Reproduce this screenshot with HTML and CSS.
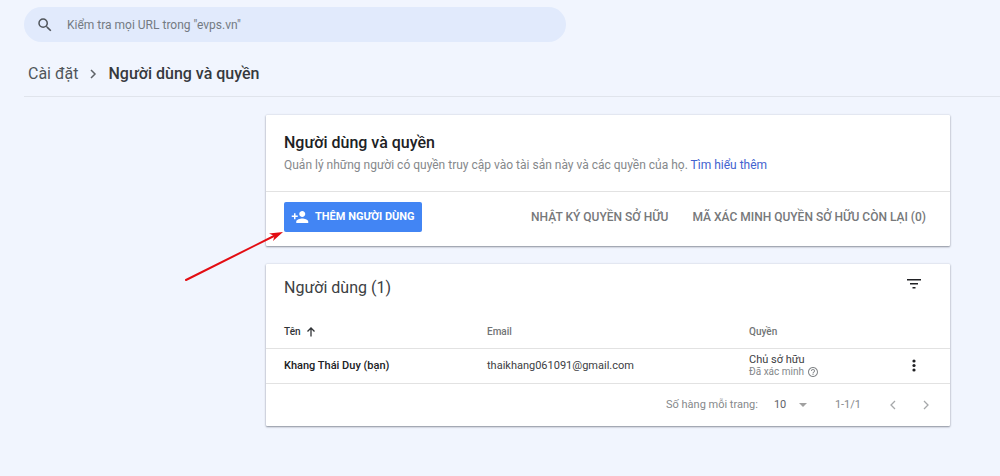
FILE: index.html
```html
<!DOCTYPE html>
<html lang="vi">
<head>
<meta charset="utf-8">
<meta name="viewport" content="width=device-width, initial-scale=1">
<title>Người dùng và quyền</title>
<link rel="stylesheet" href="styles.css">
</head>
<body>
<header class="topbar">
  <form class="search" role="search">
    <svg class="search-icon" viewBox="0 0 24 24" aria-hidden="true"><path d="M15.5 14h-.79l-.28-.27A6.47 6.47 0 0 0 16 9.5 6.5 6.5 0 1 0 9.5 16c1.61 0 3.09-.59 4.23-1.57l.27.28v.79l5 4.99L20.49 19l-4.99-5zm-6 0C7.01 14 5 11.99 5 9.5S7.01 5 9.5 5 14 7.01 14 9.5 11.99 14 9.5 14z"/></svg>
    <input class="search-input" type="text" aria-label="Kiểm tra URL" placeholder="Kiểm tra mọi URL trong &quot;evps.vn&quot;">
  </form>
</header>
<nav class="breadcrumb" aria-label="Breadcrumb">
  <a class="crumb" href="#">Cài đặt</a>
  <svg class="crumb-sep" viewBox="0 0 16 16" aria-hidden="true"><path d="M6 4l4 4-4 4"/></svg>
  <span class="crumb crumb-current">Người dùng và quyền</span>
</nav>
<main class="content">
  <section class="card">
    <div class="intro">
      <h1 class="intro-title">Người dùng và quyền</h1>
      <p class="intro-text">Quản lý những người có quyền truy cập vào tài sản này và các quyền của họ. <a class="link" href="#">Tìm hiểu thêm</a></p>
    </div>
    <div class="actions">
      <div class="add-wrap">
        <button class="add-button" type="button">
          <svg class="add-icon" viewBox="0 0 24 24" aria-hidden="true"><path d="M15 12c2.210 0 4-1.790 4-4s-1.790-4-4-4-4 1.790-4 4 1.790 4 4 4zm-9-2V7H4v3H1v2h3v3h2v-3h3v-2H6zm9 4c-2.670 0-8 1.340-8 4v2h16v-2c0-2.660-5.330-4-8-4z"/></svg>
          THÊM NGƯỜI DÙNG
        </button>
        <svg class="pointer" viewBox="0 0 100 50" aria-hidden="true"><path class="pointer-line" d="M2 49 90 5"/><path class="pointer-head" d="M99 1 89 10 90.500 5 85 2.500z"/></svg>
      </div>
      <div class="secondary">
        <button class="text-button" type="button">NHẬT KÝ QUYỀN SỞ HỮU</button>
        <button class="text-button" type="button">MÃ XÁC MINH QUYỀN SỞ HỮU CÒN LẠI (0)</button>
      </div>
    </div>
  </section>
  <section class="card">
    <div class="users-head">
      <h2 class="users-title">Người dùng (1)</h2>
      <button class="icon-button" type="button" aria-label="Lọc"><svg class="icon" viewBox="0 0 16 16" aria-hidden="true"><path d="M1 3h14v1.600H1zM4 7h8v1.600H4zM6.500 11h3v1.600h-3z"/></svg></button>
    </div>
    <table class="users">
      <thead>
        <tr>
          <th class="col-name sorted" scope="col"><span class="sort">Tên <svg class="sort-icon" viewBox="0 0 12 12" aria-hidden="true"><path d="M6 10.500V2M2.500 5.500 6 2l3.500 3.500"/></svg></span></th>
          <th class="col-email" scope="col">Email</th>
          <th class="col-role" scope="col">Quyền</th>
          <th class="col-menu"></th>
        </tr>
      </thead>
      <tbody>
        <tr>
          <td class="col-name name">Khang Thái Duy (bạn)</td>
          <td>thaikhang061091@gmail.com</td>
          <td>
            <div class="role">Chủ sở hữu</div>
            <div class="status">Đã xác minh <svg class="help" viewBox="0 0 24 24" aria-hidden="true"><path d="M11 18h2v-2h-2v2zm1-16C6.480 2 2 6.480 2 12s4.480 10 10 10 10-4.480 10-10S17.520 2 12 2zm0 18c-4.410 0-8-3.590-8-8s3.590-8 8-8 8 3.590 8 8-3.590 8-8 8zm0-14c-2.210 0-4 1.790-4 4h2c0-1.100.9-2 2-2s2 .9 2 2c0 2-3 1.750-3 5h2c0-2.250 3-2.500 3-5 0-2.210-1.790-4-4-4z"/></svg></div>
          </td>
          <td class="col-menu"><button class="icon-button" type="button" aria-label="Tùy chọn"><svg class="icon" viewBox="0 0 16 16" aria-hidden="true"><circle cx="8" cy="3" r="1.600"/><circle cx="8" cy="7.500" r="1.600"/><circle cx="8" cy="12" r="1.600"/></svg></button></td>
        </tr>
      </tbody>
    </table>
    <div class="pager">
      <label class="pager-label" for="rows">Số hàng mỗi trang:</label>
      <span class="rows-wrap">
        <select class="rows" id="rows"><option>10</option></select>
        <svg class="caret" viewBox="0 0 8 4" aria-hidden="true"><path d="M0 0h8L4 4z"/></svg>
      </span>
      <span class="range">1-1/1</span>
      <div class="pages">
        <button class="icon-button" type="button" aria-label="Trang trước"><svg class="icon chevron" viewBox="0 0 16 16" aria-hidden="true"><path d="M10 4 6 8l4 4"/></svg></button>
        <button class="icon-button" type="button" aria-label="Trang sau"><svg class="icon chevron" viewBox="0 0 16 16" aria-hidden="true"><path d="m6 4 4 4-4 4"/></svg></button>
      </div>
    </div>
  </section>
</main>
</body>
</html>
```
FILE: styles.css
```css
* { box-sizing: border-box; }

body {
  margin: 0;
  min-height: 100vh;
  background: #f1f5fe;
  color: #3c4043;
  font-family: Roboto, "Noto Sans", sans-serif;
  font-size: 12px;
  line-height: 16px;
}

button, input, select { font: inherit; color: inherit; }

button {
  padding: 0;
  border: 0;
  background: none;
  cursor: pointer;
}

a { text-decoration: none; }

.topbar { padding: 7px 26px 0 24px; }

.search {
  display: flex;
  align-items: center;
  gap: 13px;
  width: 57%;
  min-width: 280px;
  height: 35px;
  padding: 0 12px;
  border-radius: 18px;
  background: #e1eafc;
}

.search-icon { width: 18px; height: 18px; fill: #50555b; }

.search-input {
  flex: 1;
  min-width: 0;
  padding: 0;
  border: 0;
  outline: 0;
  background: none;
}

.search-input::placeholder { color: #747a82; opacity: 1; }

.breadcrumb {
  display: flex;
  align-items: center;
  gap: 7px;
  height: 55px;
  margin-left: 24px;
  padding: 10px 4px 0;
  border-bottom: 1px solid #e0e4ec;
  font-size: 16px;
}

.crumb { color: #50555a; }
.crumb-current { color: #36393d; font-weight: 500; }

.crumb-sep {
  width: 16px;
  height: 16px;
  fill: none;
  stroke: #5f6368;
  stroke-width: 1.5;
}

.content {
  display: grid;
  gap: 18px;
  padding: 18px 5% 50px 266px;
}

.card {
  border-radius: 1px;
  background: #fff;
  box-shadow: 0 1px 2px rgba(40, 45, 60, .48), 0 0 2px rgba(40, 45, 60, .16);
}

.intro {
  padding: 18px;
  border-bottom: 1px solid #e2e2e2;
}

.intro-title {
  margin: 0 0 4px;
  color: #202124;
  font-size: 16px;
  font-weight: 500;
  line-height: 20px;
}

.intro-text { margin: 0; color: #85888b; }
.link { color: #4262cf; }

.actions {
  display: flex;
  justify-content: space-between;
  align-items: center;
  padding: 10px 24px 14px 18px;
}

.add-wrap { position: relative; }

.add-button {
  display: flex;
  align-items: center;
  gap: 6px;
  height: 30px;
  padding: 0 7px;
  border-radius: 2px;
  background: #4285f4;
  color: #fff;
  font-size: 11px;
  font-weight: 700;
}

.add-icon { width: 18px; height: 18px; fill: currentColor; }

.pointer {
  position: absolute;
  top: 29px;
  right: 100%;
  width: 100px;
  height: 50px;
  pointer-events: none;
}

.pointer-line { fill: none; stroke: #e30c12; stroke-width: 2; stroke-linecap: round; }
.pointer-head { fill: #e30c12; }

.secondary { display: flex; gap: 24px; }
.text-button { color: #76787a; font-weight: 500; }

.users-head {
  display: flex;
  justify-content: space-between;
  align-items: flex-start;
  padding: 12px 28px 12px 18px;
}

.users-title {
  margin: 0;
  font-size: 16px;
  font-weight: 400;
  line-height: 24px;
}

.icon-button { display: inline-flex; vertical-align: middle; }
.icon { width: 16px; height: 16px; fill: #202124; }

.users {
  width: 100%;
  border-collapse: collapse;
  table-layout: fixed;
  font-size: 11px;
}

.users th {
  height: 36px;
  padding: 4px 0 0;
  border-bottom: 1px solid #e2e2e2;
  color: #717476;
  font-size: 10px;
  font-weight: 500;
  text-align: left;
}

.users th.sorted { color: #303336; }

.users td {
  height: 35px;
  padding: 0;
  border-bottom: 1px solid #e2e2e2;
}

.users .col-name { width: 221px; padding-left: 18px; }
.users .col-email { width: 262px; }
.users .col-role { width: auto; }
.users .col-menu { width: 44px; }

.sort { display: flex; align-items: center; gap: 4px; }
.sort-icon { width: 12px; height: 12px; fill: none; stroke: #303336; stroke-width: 1.3; }

.users .name { color: #202124; font-weight: 500; }
.role { line-height: 12px; }

.status {
  display: flex;
  align-items: center;
  gap: 3px;
  color: #85888b;
  font-size: 10px;
  line-height: 12px;
}

.help { width: 12px; height: 12px; fill: #85888b; }

.pager {
  display: flex;
  justify-content: flex-end;
  align-items: center;
  height: 42px;
  padding: 0 16px;
  color: #85888b;
  font-size: 11px;
}

.rows-wrap {
  display: flex;
  align-items: center;
  gap: 12px;
  margin: 0 28px 0 16px;
}

.rows {
  appearance: none;
  padding: 0;
  border: 0;
  background: none;
  color: #5f6368;
}

.caret { width: 8px; height: 4px; fill: #a0a0a0; }
.pages { display: flex; gap: 17px; margin-left: 24px; }
.chevron { fill: none; stroke: #a6a8aa; stroke-width: 1.3; }
```
